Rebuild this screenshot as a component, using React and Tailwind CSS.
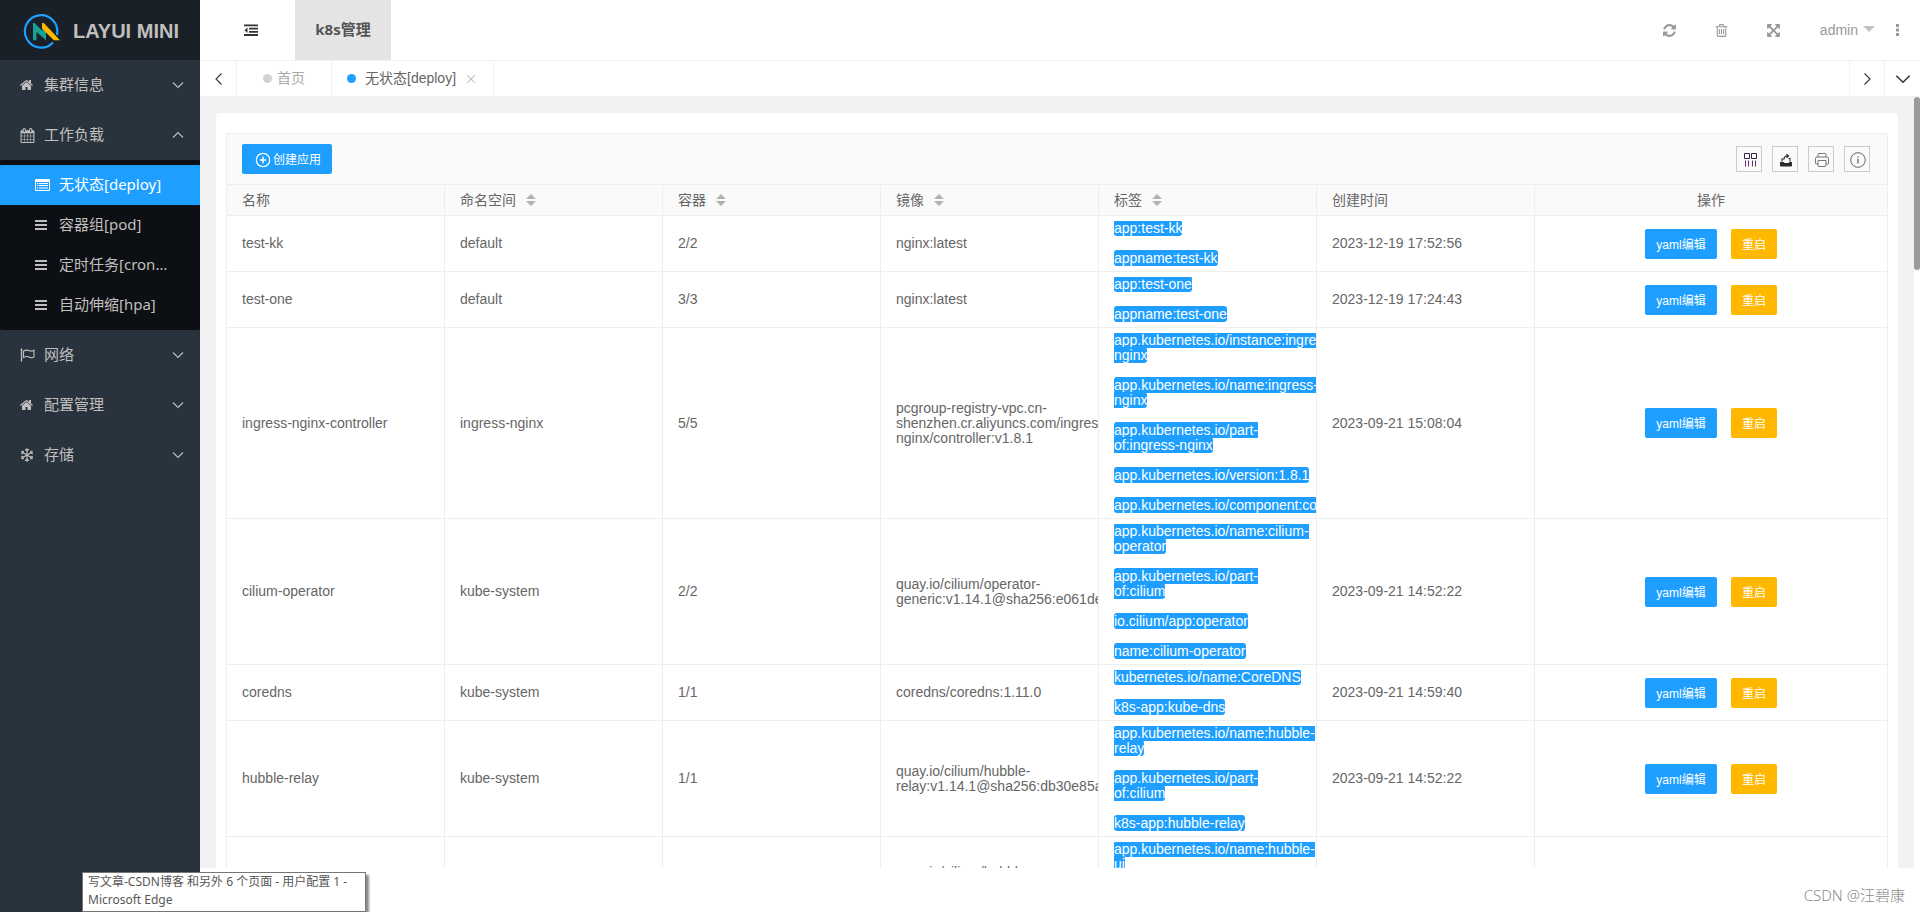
import React from "react";

const SANS = "font-['Liberation_Sans','Noto_Sans_CJK_SC',sans-serif]";
const UI = "font-['Noto_Sans','Noto_Sans_CJK_SC',sans-serif]";

const PATHS = {
  home: "M1408 992v480q0 26-19 45t-45 19h-384v-384h-256v384h-384q-26 0-45-19t-19-45v-480q0-1 .5-3t.5-3l575-474 575 474q1 2 1 6zm223-69l-62 74q-8 9-21 11h-3q-13 0-21-7l-692-577-692 577q-12 8-24 7-13-2-21-11l-62-74q-8-10-7-23.5t11-21.5l719-599q32-26 76-26t76 26l244 204v-195q0-14 9-23t23-9h192q14 0 23 9t9 23v408l219 182q10 8 11 21.5t-7 23.5z",
  calendar:
    "M192 1664h288v-288h-288v288zm352 0h320v-288h-320v288zm-352-352h288v-320h-288v320zm352 0h320v-320h-320v320zm-352-384h288v-288h-288v288zm736 736h320v-288h-320v288zm-384-736h320v-288h-320v288zm768 736h288v-288h-288v288zm-384-352h320v-320h-320v320zm-352-864v-288q0-13-9.5-22.5t-22.5-9.5h-64q-13 0-22.5 9.5t-9.5 22.5v288q0 13 9.5 22.5t22.5 9.5h64q13 0 22.5-9.5t9.5-22.5zm736 864h288v-320h-288v320zm-384-384h320v-288h-320v288zm384 0h288v-288h-288v288zm32-480v-288q0-13-9.5-22.5t-22.5-9.5h-64q-13 0-22.5 9.5t-9.5 22.5v288q0 13 9.5 22.5t22.5 9.5h64q13 0 22.5-9.5t9.5-22.5zm384-64v1280q0 52-38 90t-90 38h-1408q-52 0-90-38t-38-90v-1280q0-52 38-90t90-38h128v-96q0-66 47-113t113-47h64q66 0 113 47t47 113v96h384v-96q0-66 47-113t113-47h64q66 0 113 47t47 113v96h128q52 0 90 38t38 90z",
  refresh:
    "M1639 1056q0 5-1 7-64 268-268 434.5t-478 166.5q-146 0-282.5-55t-243.5-157l-129 129q-19 19-45 19t-45-19-19-45v-448q0-26 19-45t45-19h448q26 0 45 19t19 45-19 45l-137 137q71 66 161 102t187 36q134 0 250-65t186-179q11-17 53-117 8-23 30-23h192q13 0 22.5 9.5t9.5 22.5zm25-800v448q0 26-19 45t-45 19h-448q-26 0-45-19t-19-45 19-45l138-138q-148-137-349-137-134 0-250 65t-186 179q-11 17-53 117-8 23-30 23h-199q-13 0-22.5-9.5t-9.5-22.5v-7q65-268 270-434.5t480-166.5q146 0 284 55.5t245 156.5l130-129q19-19 45-19t45 19 19 45z",
  trash:
    "M704 736v576q0 14-9 23t-23 9h-64q-14 0-23-9t-9-23v-576q0-14 9-23t23-9h64q14 0 23 9t9 23zm256 0v576q0 14-9 23t-23 9h-64q-14 0-23-9t-9-23v-576q0-14 9-23t23-9h64q14 0 23 9t9 23zm256 0v576q0 14-9 23t-23 9h-64q-14 0-23-9t-9-23v-576q0-14 9-23t23-9h64q14 0 23 9t9 23zm128 724v-948h-896v948q0 22 7 40.5t14.5 27 10.5 8.5h832q3 0 10.5-8.5t14.5-27 7-40.5zm-672-1076h448l-48-117q-7-9-17-11h-317q-10 2-17 11zm928 32v64q0 14-9 23t-23 9h-96v948q0 83-47 143.5t-113 60.5h-832q-66 0-113-58.5t-47-141.5v-952h-96q-14 0-23-9t-9-23v-64q0-14 9-23t23-9h309l70-167q15-37 54-63t79-26h320q40 0 79 26t54 63l70 167h309q14 0 23 9t9 23z",
  expand:
    "M1411 541l-355 355 355 355 144-144q29-31 70-14 39 17 39 59v448q0 26-19 45t-45 19h-448q-42 0-59-40-17-39 14-69l144-144-355-355-355 355 144 144q31 30 14 69-17 40-59 40h-448q-26 0-45-19t-19-45v-448q0-42 40-59 39-17 69 14l144 144 355-355-355-355-144 144q-19 19-45 19-12 0-24-5-40-17-40-59v-448q0-26 19-45t45-19h448q42 0 59 40 17 39-14 69l-144 144 355 355 355-355-144-144q-31-30-14-69 17-40 59-40h448q26 0 45 19t19 45v448q0 42-39 59-13 5-25 5-26 0-45-19z",
};

function Glyph({ name, className = "size-3.5" }) {
  return (
    <svg viewBox="0 0 1792 1792" fill="currentColor" className={className} aria-hidden="true">
      <path d={PATHS[name]} />
    </svg>
  );
}

function BarsIcon() {
  return (
    <svg viewBox="0 0 14 14" fill="currentColor" className="size-3.5" aria-hidden="true">
      <path d="M0 2h12v2H0zM0 6h12v2H0zM0 10h12v2H0z" />
    </svg>
  );
}

function ListIcon() {
  return (
    <svg viewBox="0 0 15 12" className="h-3 w-[15px]" aria-hidden="true">
      <path
        fill="currentColor"
        fillRule="evenodd"
        d="M1 0h13q1 0 1 1v10q0 1-1 1H1q-1 0-1-1V1q0-1 1-1zM1 3v8h13V3zM2 4h1.300v1H2zM4 4h9v1H4zM2 6h1.300v1H2zM4 6h9v1H4zM2 8.500h1.300v1H2zM4 8.500h9v1H4z"
      />
    </svg>
  );
}

function FlagIcon() {
  return (
    <svg viewBox="0 0 15 14" className="h-3.5 w-[15px]" fill="none" stroke="currentColor" aria-hidden="true">
      <path d="M1.500 1.500v12" strokeWidth="1.300" />
      <circle cx="1.500" cy="1.500" r="1" fill="currentColor" stroke="none" />
      <path d="M3.500 3.200C6 1.500 8 2 9.500 2.800S12.500 3 14 2.200V9C12.500 9.800 11 10 9.500 9.200S6 8 3.500 9.600z" strokeWidth="1.100" />
    </svg>
  );
}

function SnowIcon() {
  return (
    <svg viewBox="0 0 14 14" className="size-3.5" fill="none" stroke="currentColor" strokeWidth="1.200" aria-hidden="true">
      {[0, 60, 120, 180, 240, 300].map((a) => (
        <path key={a} transform={`rotate(${a} 7 7)`} d="M7 7V.200M5.200 1.300L7 3l1.800-1.700" />
      ))}
    </svg>
  );
}

function Chevron({ dir = "down", className = "h-3 w-3" }) {
  const d = {
    down: "M1 3.500l5 5 5-5",
    up: "M1 8.500l5-5 5 5",
    left: "M8.500 .5l-5.500 5.500 5.500 5.500",
    right: "M3.500 .5l5.500 5.500-5.500 5.500",
  }[dir];
  return (
    <svg viewBox="0 0 12 12" className={className} fill="none" stroke="currentColor" strokeWidth="1.100" aria-hidden="true">
      <path d={d} />
    </svg>
  );
}

function Logo() {
  return (
    <svg viewBox="0 0 40 38" className="h-[38px] w-10" aria-hidden="true">
      <path d="M31 31.400A16.200 16.200 0 1 1 34.900 24" fill="none" stroke="#1e9fff" strokeWidth="2.200" />
      <path d="M11 12h1.500l8 8v-2.500l3.500 3.500v8.300l-9.500-8.300v8.300H11z" fill="#1aa094" />
      <path d="M20 12h1.800L38 29.300h-6.200L20 17.500z" fill="#ffb800" />
    </svg>
  );
}

const SUB_ITEMS = [
  { label: "无状态[deploy]", active: true },
  { label: "容器组[pod]" },
  { label: "定时任务[cronjob]" },
  { label: "自动伸缩[hpa]" },
];

function NavItem({ icon, label, open }) {
  return (
    <button type="button" aria-expanded={!!open} className="flex h-[50px] w-full items-center pr-4 pl-5 text-left text-[15px]">
      <span className="flex w-6 items-center">{icon}</span>
      <span className="flex-1 pb-0.5">{label}</span>
      <Chevron dir={open ? "up" : "down"} />
    </button>
  );
}

function Sidebar() {
  return (
    <aside className={`flex w-[200px] shrink-0 flex-col bg-[#28333e] text-[#c1bfbd] ${UI}`}>
      <a href="#" className={`flex h-[60px] items-center gap-[11px] bg-[#192027] pl-[22px] ${SANS}`}>
        <Logo />
        <h1 className="pt-0.5 text-xl font-bold whitespace-nowrap">LAYUI MINI</h1>
      </a>
      <nav>
        <NavItem icon={<Glyph name="home" />} label="集群信息" />
        <NavItem icon={<Glyph name="calendar" className="size-[15px]" />} label="工作负载" open />
        <ul className="rounded-xs bg-[#0c0f13] py-[5px]">
          {SUB_ITEMS.map((s) => (
            <li key={s.label}>
              <a
                href="#"
                className={`flex h-10 items-center pr-8 pl-[35px] text-[15px] ${s.active ? "bg-[#1e9fff] text-white" : ""}`}
              >
                <span className="flex w-6 shrink-0 items-center">{s.active ? <ListIcon /> : <BarsIcon />}</span>
                <span className="min-w-0 truncate pb-0.5">{s.label}</span>
              </a>
            </li>
          ))}
        </ul>
        <NavItem icon={<FlagIcon />} label="网络" />
        <NavItem icon={<Glyph name="home" />} label="配置管理" />
        <NavItem icon={<SnowIcon />} label="存储" />
      </nav>
    </aside>
  );
}

function Header() {
  return (
    <header className="flex h-[60px] shrink-0 items-stretch justify-between bg-white">
      <div className="flex">
        <button type="button" aria-label="折叠菜单" className="flex w-[95px] items-center justify-center pl-[7px] text-[#333]">
          <svg viewBox="0 0 14 12" className="h-3 w-3.5" fill="currentColor" aria-hidden="true">
            <path d="M0 .5h14v1.800H0zM5 3.700h9v1.800H5zM5 6.900h9v1.800H5zM0 10.100h14v1.800H0zM3.500 3.500v5.400L.5 6.200z" />
          </svg>
        </button>
        <button type="button" className={`w-24 bg-[#e4e4e4] pb-0.5 text-[15px] font-bold text-[#555] ${UI}`}>
          k8s管理
        </button>
      </div>
      <div className="flex text-[#999]">
        <button type="button" aria-label="刷新" className="flex w-[52px] items-center justify-center">
          <Glyph name="refresh" className="size-[15px]" />
        </button>
        <button type="button" aria-label="清理" className="flex w-[52px] items-center justify-center">
          <Glyph name="trash" className="size-[15px]" />
        </button>
        <button type="button" aria-label="全屏" className="flex w-[52px] items-center justify-center">
          <Glyph name="expand" className="size-[15px]" />
        </button>
        <button type="button" className="flex items-center gap-[5px] pl-5 text-sm">
          admin
          <svg viewBox="0 0 12 6" className="mb-0.5 h-1.5 w-3" fill="#c2c2c2" aria-hidden="true">
            <path d="M0 0h12L6 6z" />
          </svg>
        </button>
        <button type="button" aria-label="更多" className="flex w-[45px] items-center justify-center">
          <svg viewBox="0 0 3 12" className="h-3 w-[3px]" fill="currentColor" aria-hidden="true">
            <path d="M0 0h3v3H0zM0 4.500h3v3H0zM0 9h3v3H0z" />
          </svg>
        </button>
      </div>
    </header>
  );
}

function TabBar() {
  return (
    <div className="flex h-[37px] shrink-0 items-stretch border-y border-[#f2f2f2] bg-white text-sm">
      <button type="button" aria-label="向左" className="flex w-[37px] items-center justify-center border-r border-[#f2f2f2] pl-0.5 text-[#333]">
        <Chevron dir="left" />
      </button>
      <button type="button" className="flex w-[95px] items-center gap-[5px] border-r border-[#f2f2f2] pl-[26px] text-[#aaa]">
        <span className="size-[9px] rounded-full bg-[#d2d2d2]" />
        <span className="pb-0.5">首页</span>
      </button>
      <div className="flex w-[162px] items-center border-r border-[#f2f2f2] pl-[15px] text-[#666]">
        <button type="button" className="flex items-center gap-[9px] whitespace-nowrap">
          <span className="size-[9px] rounded-full bg-[#1e9fff]" />
          <span className="pb-0.5">无状态[deploy]</span>
        </button>
        <button type="button" aria-label="关闭" className="ml-[11px] text-[#c2c2c2]">
          <svg viewBox="0 0 8 8" className="size-2" stroke="currentColor" strokeWidth="1.100" aria-hidden="true">
            <path d="M0 0l8 8M8 0L0 8" />
          </svg>
        </button>
      </div>
      <div className="flex-1" />
      <button type="button" aria-label="向右" className="flex w-[35px] items-center justify-center border-l border-[#f2f2f2] text-[#333]">
        <Chevron dir="right" />
      </button>
      <button type="button" aria-label="标签菜单" className="flex w-9 items-center justify-center border-l border-[#f2f2f2] text-[#333]">
        <Chevron className="size-4" />
      </button>
    </div>
  );
}

const COLUMNS = [
  { title: "名称" },
  { title: "命名空间", sort: true },
  { title: "容器", sort: true },
  { title: "镜像", sort: true },
  { title: "标签", sort: true },
  { title: "创建时间" },
];

const ROWS = [
  {
    name: "test-kk",
    ns: "default",
    pods: "2/2",
    images: ["nginx:latest"],
    tags: ["app:test-kk", "appname:test-kk"],
    time: "2023-12-19 17:52:56",
  },
  {
    name: "test-one",
    ns: "default",
    pods: "3/3",
    images: ["nginx:latest"],
    tags: ["app:test-one", "appname:test-one"],
    time: "2023-12-19 17:24:43",
  },
  {
    name: "ingress-nginx-controller",
    ns: "ingress-nginx",
    pods: "5/5",
    images: ["pcgroup-registry-vpc.cn-shenzhen.cr.aliyuncs.com/ingress-nginx/controller:v1.8.1"],
    tags: [
      "app.kubernetes.io/instance:ingress-nginx",
      "app.kubernetes.io/name:ingress-nginx",
      "app.kubernetes.io/part-of:ingress-nginx",
      "app.kubernetes.io/version:1.8.1",
      "app.kubernetes.io/component:controller",
    ],
    time: "2023-09-21 15:08:04",
  },
  {
    name: "cilium-operator",
    ns: "kube-system",
    pods: "2/2",
    images: ["quay.io/cilium/operator-generic:v1.14.1@sha256:e061de0a930534c7e3f8feda"],
    tags: [
      "app.kubernetes.io/name:cilium-operator",
      "app.kubernetes.io/part-of:cilium",
      "io.cilium/app:operator",
      "name:cilium-operator",
    ],
    time: "2023-09-21 14:52:22",
  },
  {
    name: "coredns",
    ns: "kube-system",
    pods: "1/1",
    images: ["coredns/coredns:1.11.0"],
    tags: ["kubernetes.io/name:CoreDNS", "k8s-app:kube-dns"],
    time: "2023-09-21 14:59:40",
  },
  {
    name: "hubble-relay",
    ns: "kube-system",
    pods: "1/1",
    images: ["quay.io/cilium/hubble-relay:v1.14.1@sha256:db30e85a7abc10589ce2a97d"],
    tags: ["app.kubernetes.io/name:hubble-relay", "app.kubernetes.io/part-of:cilium", "k8s-app:hubble-relay"],
    time: "2023-09-21 14:52:22",
  },
  {
    name: "hubble-ui",
    ns: "kube-system",
    pods: "1/1",
    images: ["quay.io/cilium/hubble-ui:v0.12.0@sha256:1c876cfa1d5e35bc", "quay.io/cilium/hubble-ui-backend:v0.12.0@sha256:8a79a1aa"],
    tags: ["app.kubernetes.io/name:hubble-ui", "app.kubernetes.io/part-of:cilium", "k8s-app:hubble-ui"],
    time: "2023-09-21 14:52:22",
  },
];

function Cell({ children }) {
  return (
    <td className="border-r border-b border-[#eee] py-[5px] align-middle">
      <div className="overflow-hidden px-[15px] leading-[15px]">{children}</div>
    </td>
  );
}

function ToolButton({ label, children }) {
  return (
    <button type="button" aria-label={label} className="flex size-[26px] items-center justify-center border border-[#ccc] pt-0.5 pl-0.5 text-[#333]">
      {children}
    </button>
  );
}

function Toolbar() {
  return (
    <div className="flex items-center justify-between border-b border-[#eee] bg-[#fafafa] py-2.5 pr-[17px] pl-[15px]">
      <button
        type="button"
        className="flex h-[30px] w-[90px] items-center justify-center gap-0.5 rounded-xs bg-[#1e9fff] pt-0.5 pl-0.5 text-xs text-white"
      >
        <svg viewBox="0 0 16 16" className="size-4" fill="none" stroke="currentColor" strokeWidth="1.200" aria-hidden="true">
          <circle cx="8" cy="8" r="6.700" />
          <path d="M8 4.800v6.400M4.800 8h6.400" strokeWidth="1.500" />
        </svg>
        创建应用
      </button>
      <div className="flex gap-2.5">
        <ToolButton label="筛选列">
          <svg viewBox="0 0 14 14" className="size-3.5" fill="none" stroke="#3b1f47" aria-hidden="true">
            <path d="M1.500 .5h5v5h-5zM8.500 .5h5v5h-5z" />
            <path d="M2.500 7.500v6M5.500 7.500v6M9.500 7.500v6M12.500 7.500v6" stroke="#6b2a78" />
          </svg>
        </ToolButton>
        <ToolButton label="导出">
          <svg viewBox="0 0 14 14" className="size-3.5" aria-hidden="true">
            <path d="M1 9h3.500l1 1h4l1-1H13v3.500q0 1-1 1H2q-1 0-1-1z" fill="#2b2b2b" />
            <path d="M3 8.500V6h2.500M11 8.500V5.500H9.500M5 6.500C5 4 6 3 8.500 3" fill="none" stroke="#2b2b2b" strokeWidth="1.100" />
            <path d="M7.500 .5L10.500 3l-3 2.500z" fill="#2b2b2b" />
          </svg>
        </ToolButton>
        <ToolButton label="打印">
          <svg viewBox="0 0 16 16" className="size-4" fill="none" stroke="#777" aria-hidden="true">
            <path d="M4 5V2.500q0-1 1-1h6q1 0 1 1V5" />
            <path d="M4 12H2.500q-1 0-1-1V6.500q0-1.500 1.500-1.500h10q1.500 0 1.500 1.500V11q0 1-1 1H12" />
            <path d="M4 8.500h8V13q0 1.500-1 1.500H5q-1 0-1-1.500z" />
          </svg>
        </ToolButton>
        <ToolButton label="提示">
          <svg viewBox="0 0 16 16" className="size-4" fill="none" stroke="#555" aria-hidden="true">
            <circle cx="8" cy="8" r="7.300" strokeWidth=".9" />
            <path d="M8 6.800v4.700M8 4.200v1.300" strokeWidth="1.200" />
          </svg>
        </ToolButton>
      </div>
    </div>
  );
}

function DeployTable() {
  return (
    <table className="w-full table-fixed border-separate border-spacing-0 text-sm text-[#666]">
      <colgroup>
        {COLUMNS.map((c) => (
          <col key={c.title} className="w-[218px]" />
        ))}
        <col />
      </colgroup>
      <thead className="bg-[#fafafa]">
        <tr>
          {COLUMNS.map((c) => (
            <th key={c.title} scope="col" className="h-[31px] border-r border-b border-[#eee] px-[15px] text-left font-normal">
              <span className="flex items-center gap-2.5 leading-5">
                {c.title}
                {c.sort && (
                  <button type="button" aria-label={`按${c.title}排序`}>
                    <svg viewBox="0 0 10 12" className="h-3 w-2.5" fill="#b2b2b2" aria-hidden="true">
                      <path d="M0 5l5-5 5 5zM0 7h10l-5 5z" />
                    </svg>
                  </button>
                )}
              </span>
            </th>
          ))}
          <th scope="col" className="h-[31px] border-b border-[#eee] text-center leading-5 font-normal">
            操作
          </th>
        </tr>
      </thead>
      <tbody>
        {ROWS.map((r) => (
          <tr key={r.name}>
            <Cell>{r.name}</Cell>
            <Cell>{r.ns}</Cell>
            <Cell>{r.pods}</Cell>
            <Cell>
              {r.images.map((i) => (
                <p key={i}>{i}</p>
              ))}
            </Cell>
            <Cell>
              <div className="flex flex-col gap-[15px]">
                {r.tags.map((t) => (
                  <p key={t}>
                    <span className="rounded-[3px] bg-[#1e9fff] text-white">{t}</span>
                  </p>
                ))}
              </div>
            </Cell>
            <Cell>{r.time}</Cell>
            <td className="border-b border-[#eee] align-middle">
              <div className="flex items-center justify-center gap-3.5 text-xs text-white">
                <button type="button" className="h-[30px] w-[72px] rounded-xs bg-[#1e9fff] pt-0.5">
                  yaml编辑
                </button>
                <button type="button" className="h-[30px] w-[46px] rounded-xs bg-[#ffb800] pt-0.5">
                  重启
                </button>
              </div>
            </td>
          </tr>
        ))}
      </tbody>
    </table>
  );
}

export default function App() {
  return (
    <div className={`relative flex h-screen overflow-hidden bg-white ${SANS}`}>
      <Sidebar />
      <div className="flex min-w-0 flex-1 flex-col">
        <Header />
        <TabBar />
        <main className="flex min-h-0 flex-1">
          <div className="min-w-0 flex-1 overflow-hidden bg-[#f2f2f2] p-4">
            <section className="rounded-[4px] bg-white px-2.5 py-5">
              <div className="border border-[#eee]">
                <Toolbar />
                <DeployTable />
              </div>
            </section>
          </div>
          <div className="w-1.5 bg-white">
            <div className="h-[173px] rounded-full bg-[#9b9a9f]" />
          </div>
        </main>
        <footer className={`flex h-11 shrink-0 items-center justify-end pt-2.5 pr-[15px] text-[15px] font-light text-[#8c8c8c] ${UI}`}>
          CSDN @汪碧康
        </footer>
      </div>
      <div
        role="tooltip"
        className={`absolute bottom-0 left-[82px] w-[284px] border border-[#767676] bg-white px-[5px] pb-0.5 text-xs leading-[18px] text-[#575757] shadow-[3px_3px_2px_rgba(0,0,0,0.45)] ${UI}`}
      >
        <p className="whitespace-nowrap">写文章-CSDN博客 和另外 6 个页面 - 用户配置 1 -</p>
        <p>Microsoft Edge</p>
      </div>
    </div>
  );
}
